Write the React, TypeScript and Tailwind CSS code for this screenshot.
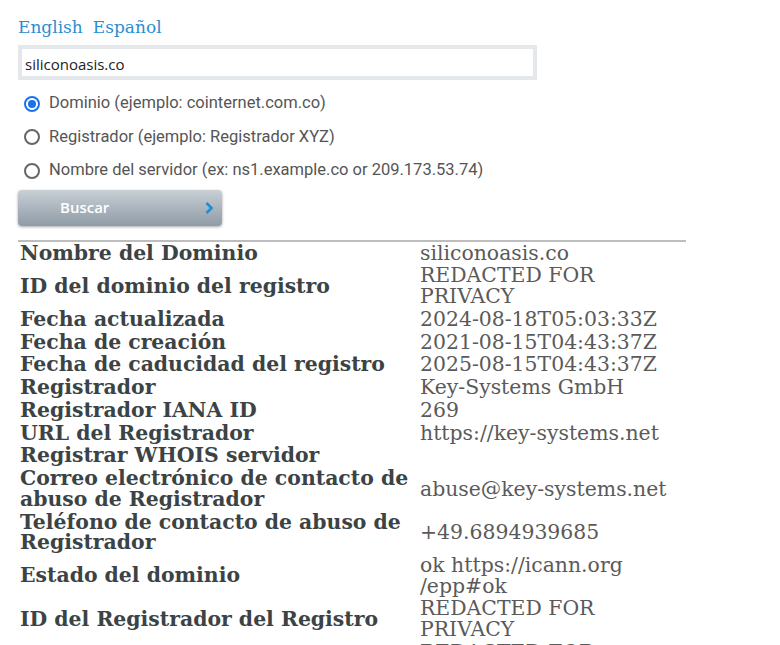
import { useState, Fragment } from 'react'

const ROWS: [string, string[]][] = [
  ['Nombre del Dominio', ['siliconoasis.co']],
  ['ID del dominio del registro', ['REDACTED FOR PRIVACY']],
  ['Fecha actualizada', ['2024-08-18T05:03:33Z']],
  ['Fecha de creación', ['2021-08-15T04:43:37Z']],
  ['Fecha de caducidad del registro', ['2025-08-15T04:43:37Z']],
  ['Registrador', ['Key-Systems GmbH']],
  ['Registrador IANA ID', ['269']],
  ['URL del Registrador', ['https://key-systems.net']],
  ['Registrar WHOIS servidor', []],
  ['Correo electrónico de contacto de abuso de Registrador', ['abuse@key-systems.net']],
  ['Teléfono de contacto de abuso de Registrador', ['+49.6894939685']],
  ['Estado del dominio', ['ok https://icann.org', '/epp#ok']],
  ['ID del Registrador del Registro', ['REDACTED FOR PRIVACY']],
  ['Nombre del Registrante', ['REDACTED FOR PRIVACY']],
]

const SEARCH_TYPES = [
  { id: 'domain', label: 'Dominio (ejemplo: cointernet.com.co)' },
  { id: 'registrar', label: 'Registrador (ejemplo: Registrador XYZ)' },
  { id: 'ns', label: 'Nombre del servidor (ex: ns1.example.co or 209.173.53.74)' },
]

const App = () => {
  const [query, setQuery] = useState('siliconoasis.co')
  const [type, setType] = useState('domain')

  return (
    <div className="h-[645px] overflow-hidden bg-white px-[18px] pt-[15px]">
      {/* idioma */}
      <div className="flex gap-[10px] font-['DejaVu_Serif',serif] text-[17px] leading-[24px] text-[#2a8ed0]">
        <a href="#" className="hover:underline">English</a>
        <a href="#" className="hover:underline">Español</a>
      </div>

      {/* buscador */}
      <div className="mt-[6px] w-[519px] border-[4px] border-[#e4e8eb] bg-white">
        <input
          value={query}
          onChange={(e) => setQuery(e.target.value)}
          className="block h-[27px] w-full px-[3px] pt-[3px] font-['Open_Sans',sans-serif] text-[15px] text-[#222] outline-none"
        />
      </div>

      <div className="mt-[7px] flex flex-col font-['Roboto',sans-serif] text-[16.5px] text-[#555]">
        {SEARCH_TYPES.map((t) => (
          <label key={t.id} className="flex h-[33.5px] items-center gap-[9px] pl-[6px]">
            <span
              className={`flex h-[16px] w-[16px] items-center justify-center rounded-full border-2 ${type === t.id ? 'border-[#1a73e8]' : 'border-[#666]'}`}
              onClick={() => setType(t.id)}
            >
              {type === t.id && <span className="h-[8px] w-[8px] rounded-full bg-[#1a73e8]" />}
            </span>
            {t.label}
          </label>
        ))}
      </div>

      <button className="mt-[2px] flex h-[36px] w-[204px] items-center justify-between rounded-[4px] bg-gradient-to-b from-[#c9d0d6] to-[#8f9ba6] pl-[42px] pr-[8px] font-['Open_Sans',sans-serif] text-[15px] font-semibold text-white shadow-[0_1px_3px_rgba(0,0,0,0.35)]">
        Buscar
        <svg width="10" height="14" viewBox="0 0 10 14" fill="none">
          <path d="M2.5 2l5 5-5 5" stroke="#1b8fd6" strokeWidth="2.6" />
        </svg>
      </button>

      {/* resultado */}
      <div className="mt-[14px] w-[668px] border-t-[2px] border-[#bdbdbd]">
        <table className="w-full table-fixed border-collapse font-['DejaVu_Serif',serif] text-[20.4px] leading-[20.6px]">
          <colgroup>
            <col className="w-[402px]" />
            <col />
          </colgroup>
          <tbody>
            {ROWS.map(([label, value]) => (
              <tr key={label}>
                <td className="py-[1.1px] pl-[2px] pr-[2px] align-middle font-bold text-[#3c4345]">{label}</td>
                <td className="py-[1.1px] align-middle text-[#5a5a5a]">
                  {value.map((v, i) => (
                    <Fragment key={i}>
                      {i > 0 && <wbr />}
                      {v}
                    </Fragment>
                  ))}
                </td>
              </tr>
            ))}
          </tbody>
        </table>
      </div>
    </div>
  )
}

export default App
